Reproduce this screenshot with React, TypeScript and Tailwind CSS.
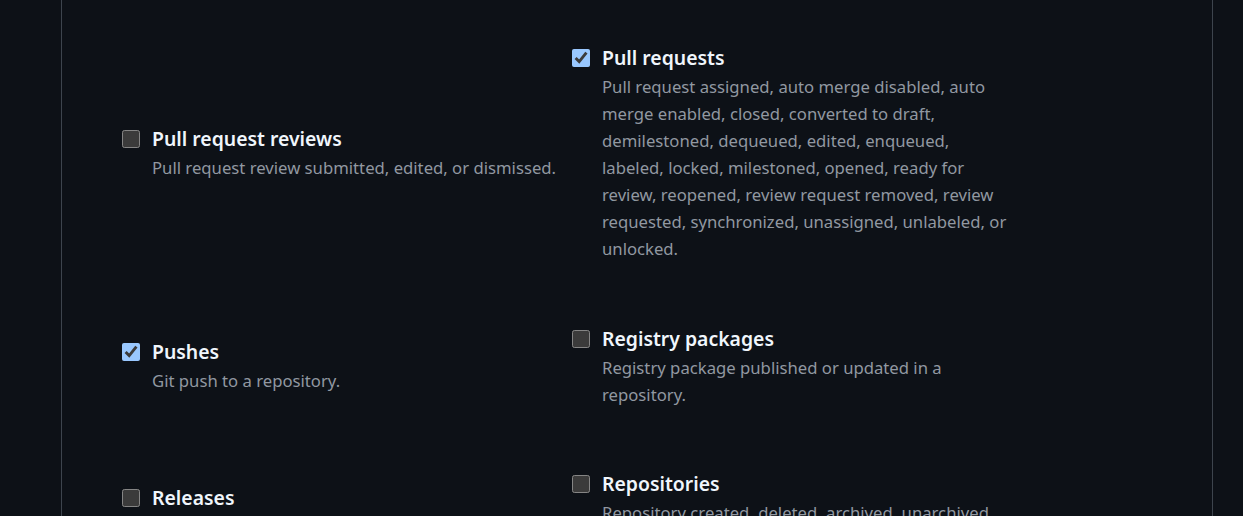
import React from 'react';

type Ev = { title: string; desc: string; checked?: boolean };

const rows: [Ev, Ev][] = [
  [
    { title: 'Pull request reviews', desc: 'Pull request review submitted, edited, or dismissed.' },
    {
      title: 'Pull requests',
      checked: true,
      desc: 'Pull request assigned, auto merge disabled, auto merge enabled, closed, converted to draft, demilestoned, dequeued, edited, enqueued, labeled, locked, milestoned, opened, ready for review, reopened, review request removed, review requested, synchronized, unassigned, unlabeled, or unlocked.',
    },
  ],
  [
    { title: 'Pushes', checked: true, desc: 'Git push to a repository.' },
    { title: 'Registry packages', desc: 'Registry package published or updated in a repository.' },
  ],
  [
    { title: 'Releases', desc: 'Release created, edited, published, unpublished, or deleted.' },
    {
      title: 'Repositories',
      desc: 'Repository created, deleted, archived, unarchived, publicized, privatized, edited, renamed, or transferred.',
    },
  ],
];

function EventItem({ ev }: { ev: Ev }) {
  return (
    <label className="flex items-start gap-[12px]">
      <input
        type="checkbox"
        defaultChecked={ev.checked}
        className="mt-[6px] h-[18px] w-[18px] shrink-0 m-0 [color-scheme:dark]"
      />
      <div className="flex flex-col max-w-[412px]">
        <span className="text-[19.4px] leading-[30px] font-semibold text-[#f0f6fc]">{ev.title}</span>
        <span className="text-[16.7px] leading-[27px] text-[#9198a1]">{ev.desc}</span>
      </div>
    </label>
  );
}

export default function App() {
  return (
    <div
      className="h-[516px] overflow-hidden bg-[#0d1117]"
      style={{ fontFamily: '"Segoe UI", "Noto Sans", sans-serif' }}
    >
      <div className="ml-[61px] w-[1152px] h-full border-x border-[#3d444d] pl-[60px] pt-[43px]">
        <div className="grid grid-cols-[450px_450px] items-center gap-y-[61.5px]">
          {rows.map(([a, b], i) => (
            <React.Fragment key={i}>
              <EventItem ev={a} />
              <EventItem ev={b} />
            </React.Fragment>
          ))}
        </div>
      </div>
    </div>
  );
}
